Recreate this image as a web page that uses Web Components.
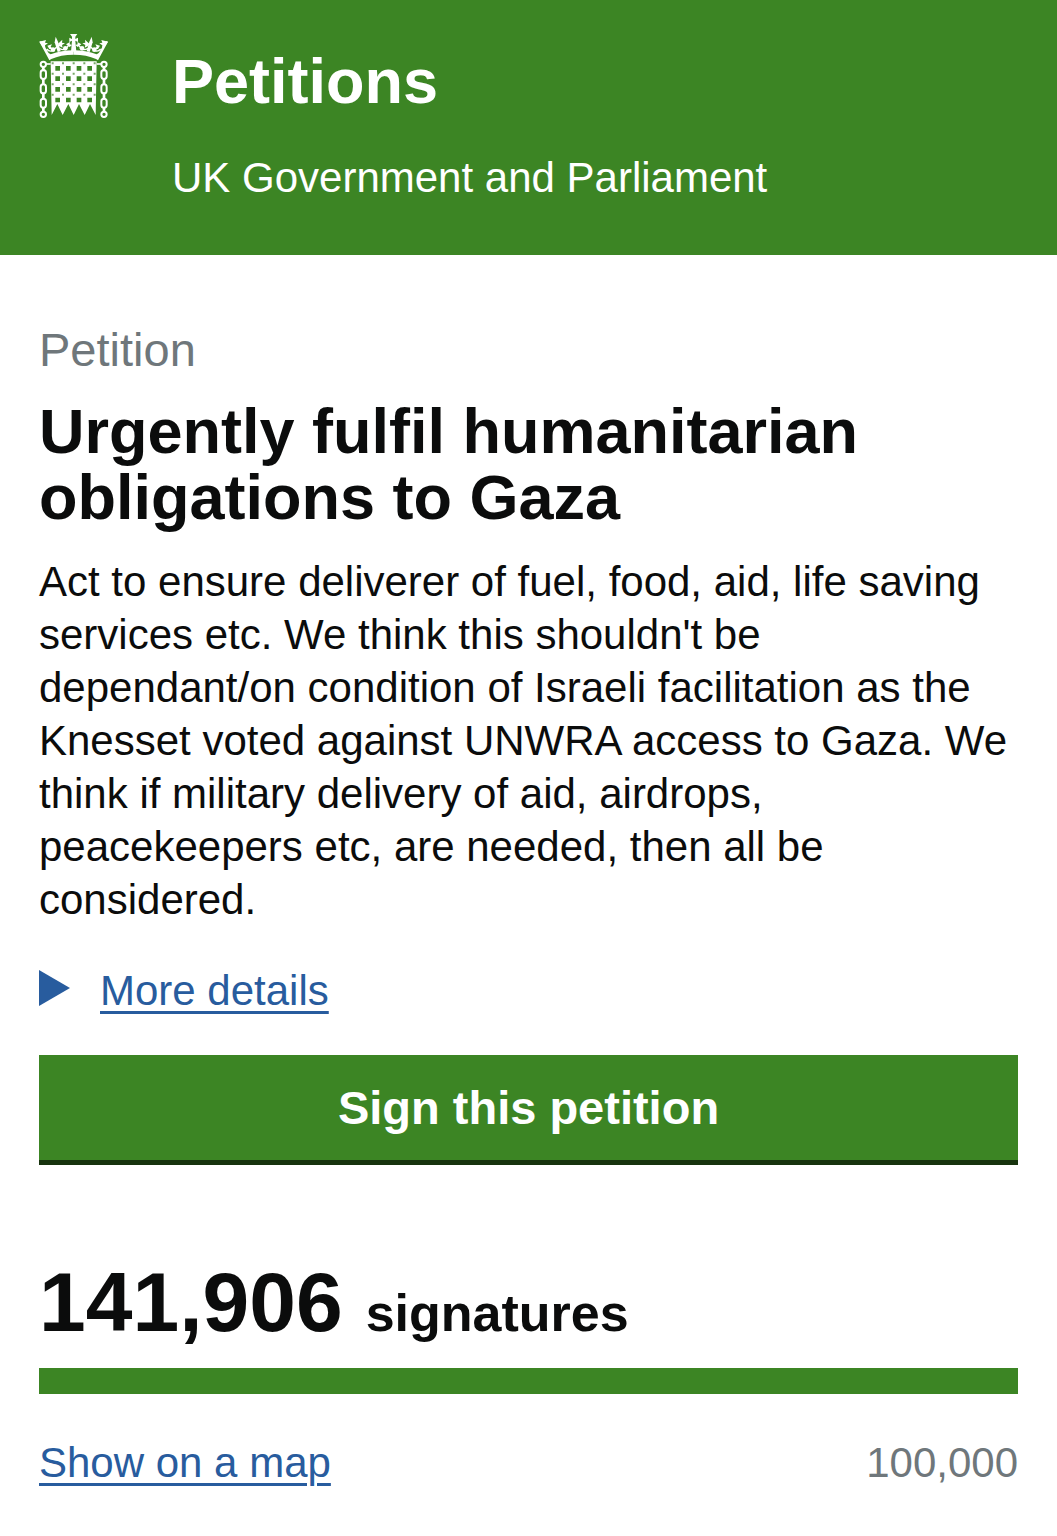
<!DOCTYPE html>
<html lang="en">
<head>
<meta charset="utf-8">
<meta name="viewport" content="width=device-width, initial-scale=1">
<title>Urgently fulfil humanitarian obligations to Gaza - Petitions</title>
<style>
  :root {
    --green: #3c8524;
    --link: #285c9e;
    --text: #0b0c0c;
    --muted: #6f777b;
    --gutter: 39px;
  }
  body {
    margin: 0;
    background: #fff;
    color: var(--text);
    font: 42px/53px "Liberation Sans", Arial, sans-serif;
  }
  main { display: block; padding: 68px var(--gutter) 40px; }
</style>
</head>
<body>
<site-header>
  <span slot="title">Petitions</span>
  <span slot="tagline">UK Government and Parliament</span>
</site-header>
<main>
  <petition-heading>
    <span slot="kicker">Petition</span>
    <span>Urgently fulfil humanitarian obligations to Gaza</span>
  </petition-heading>
  <petition-body>Act to ensure deliverer of fuel, food, aid, life saving services etc. We think this shouldn't be dependant/on condition of Israeli facilitation as the Knesset voted against UNWRA access to Gaza. We think if military delivery of aid, airdrops, peacekeepers etc, are needed, then all be considered.</petition-body>
  <more-details>More details</more-details>
  <sign-button>Sign this petition</sign-button>
  <signature-count>
    <span slot="count">141,906</span>
    <span slot="label">signatures</span>
    <span slot="map">Show on a map</span>
    <span slot="goal">100,000</span>
  </signature-count>
</main>

<script>
  const define = (name, html) => {
    const template = document.createElement("template");
    template.innerHTML = html;
    customElements.define(name, class extends HTMLElement {
      constructor() {
        super();
        this.attachShadow({ mode: "open" }).append(template.content.cloneNode(true));
      }
    });
  };

  define("portcullis-logo", `
    <style>
      :host { display: block; }
      svg { display: block; width: 69px; height: 85px; }
    </style>
    <svg viewBox="27 27 207 255" fill="#fff" aria-hidden="true">
      <defs>
        <g id="chain" fill="none" stroke="#fff" stroke-width="6">
          <circle cx="40" cy="118" r="8"/>
          <rect x="32" y="135" width="16" height="27" rx="8"/>
          <rect x="32" y="178" width="16" height="27" rx="8"/>
          <rect x="32" y="221" width="16" height="27" rx="8"/>
          <circle cx="40" cy="268" r="8"/>
          <path d="M40 126v13M40 160v20M40 203v20M40 246v16" stroke-width="8"/>
          <path d="M48 117h14" stroke-width="5"/>
        </g>
        <g id="crown-side">
          <path d="M58 106L28 50L34 48L50 74Q54 84 62 88Q95 76 131 76V89Q92 89 64 102Z"/>
          <path d="M28 50L48 45L45 53L54 55L45 61L46 69L36 62Z"/>
          <path d="M52 62L66 58L62 65L70 73L58 72Z"/>
          <path d="M77 35L84 50L92 79L83 81L74 52Z"/>
          <path d="M84 56L97 44L96 53L105 55L96 60L98 68L87 63Z"/>
          <circle cx="69" cy="74" r="7"/>
          <circle cx="106" cy="70" r="7"/>
          <path d="M50 72Q62 87 80 66M88 70Q105 81 115 62" fill="none" stroke="#fff" stroke-width="4"/>
          <path d="M108 58L120 51L119 58L126 60L119 66Z"/>
        </g>
      </defs>
      <use href="#crown-side"/>
      <use href="#crown-side" transform="translate(262 0) scale(-1 1)"/>
      <path d="M120 27h22l-6 8v7l8-4v13l-8-4 3 33h-16l3-33-8 4V38l8 4v-7Z"/>
      <path d="M62 109H200L197 270L180 237L164 270L147 237L131 270L115 237L98 270L82 237L65 270Z"/>
      <g fill="#3c8524">
        <path id="row" d="M76 123h14v14H76ZM108 123h14v14h-14ZM140 123h14v14h-14ZM172 123h14v14h-14Z"/>
        <use href="#row" y="31"/><use href="#row" y="63"/><use href="#row" y="95"/>
        <path id="rivets" opacity=".7" d="M65 112h6v6h-6ZM96 112h6v6h-6ZM128 112h6v6h-6ZM160 112h6v6h-6ZM191 112h6v6h-6Z"/>
        <use href="#rivets" y="31"/><use href="#rivets" y="63"/><use href="#rivets" y="94"/>
      </g>
      <use href="#chain"/>
      <use href="#chain" transform="translate(262 0) scale(-1 1)"/>
    </svg>`);

  define("site-header", `
    <style>
      :host { display: block; background: var(--green); color: #fff; }
      header { display: flex; align-items: flex-start; gap: 64px; padding: 34px var(--gutter) 51px; }
      .words { display: flex; flex-direction: column; gap: 37px; padding-top: 14px; }
      a { color: inherit; text-decoration: none; font-weight: 700; font-size: 63px; line-height: 66px; }
      p { margin: 0; }
    </style>
    <header>
      <portcullis-logo></portcullis-logo>
      <div class="words">
        <a href="#"><slot name="title"></slot></a>
        <p><slot name="tagline"></slot></p>
      </div>
    </header>`);

  define("petition-heading", `
    <style>
      :host { display: block; }
      h1 { margin: 0; font-size: 63px; line-height: 66px; }
      .kicker { display: block; margin-bottom: 22px; font-weight: 400; font-size: 47px; line-height: 53px; color: var(--muted); }
    </style>
    <h1><span class="kicker"><slot name="kicker"></slot></span><slot></slot></h1>`);

  define("petition-body", `
    <style>
      :host { display: block; margin-top: 25px; }
      p { margin: 0; }
    </style>
    <p><slot></slot></p>`);

  define("more-details", `
    <style>
      :host { display: block; margin-top: 38px; color: var(--link); }
      summary { display: flex; align-items: center; gap: 30px; width: fit-content; list-style: none; cursor: pointer; }
      summary::-webkit-details-marker { display: none; }
      svg { display: block; width: 31px; height: 36px; margin-bottom: 6px; fill: currentColor; }
      details[open] svg { transform: rotate(90deg); }
      span { text-decoration: underline; text-decoration-thickness: 3px; text-underline-offset: 6px; }
    </style>
    <details>
      <summary><svg viewBox="0 0 31 36" aria-hidden="true"><path d="M0 0L31 18L0 36Z"/></svg><span><slot></slot></span></summary>
    </details>`);

  define("sign-button", `
    <style>
      :host { display: block; margin-top: 38px; }
      button {
        display: block; width: 100%; margin: 0; padding: 26px 20px; border: 0; border-radius: 0;
        background: var(--green); color: #fff; box-shadow: 0 5px 0 #17330e;
        font: 700 47px/53px "Liberation Sans", Arial, sans-serif; cursor: pointer;
      }
    </style>
    <button type="button"><slot></slot></button>`);

  define("signature-count", `
    <style>
      :host { display: block; margin-top: 92px; }
      p { display: flex; align-items: baseline; gap: 23px; margin: 0; font-weight: 700; }
      .count { font-size: 84px; line-height: 100px; }
      .label { font-size: 52px; }
      .bar { height: 26px; margin-top: 16px; background: #ddd; }
      .fill { width: 100%; height: 100%; background: var(--green); }
      .foot { display: flex; justify-content: space-between; margin-top: 42px; }
      a { color: var(--link); text-decoration: underline; text-decoration-thickness: 3px; text-underline-offset: 6px; }
      .goal { color: var(--muted); }
    </style>
    <p><span class="count"><slot name="count"></slot></span><span class="label"><slot name="label"></slot></span></p>
    <div class="bar" role="progressbar" aria-label="Signatures" aria-valuemin="0" aria-valuemax="100000" aria-valuenow="100000"><div class="fill"></div></div>
    <div class="foot"><a href="#"><slot name="map"></slot></a><span class="goal"><slot name="goal"></slot></span></div>`);
</script>
</body>
</html>
